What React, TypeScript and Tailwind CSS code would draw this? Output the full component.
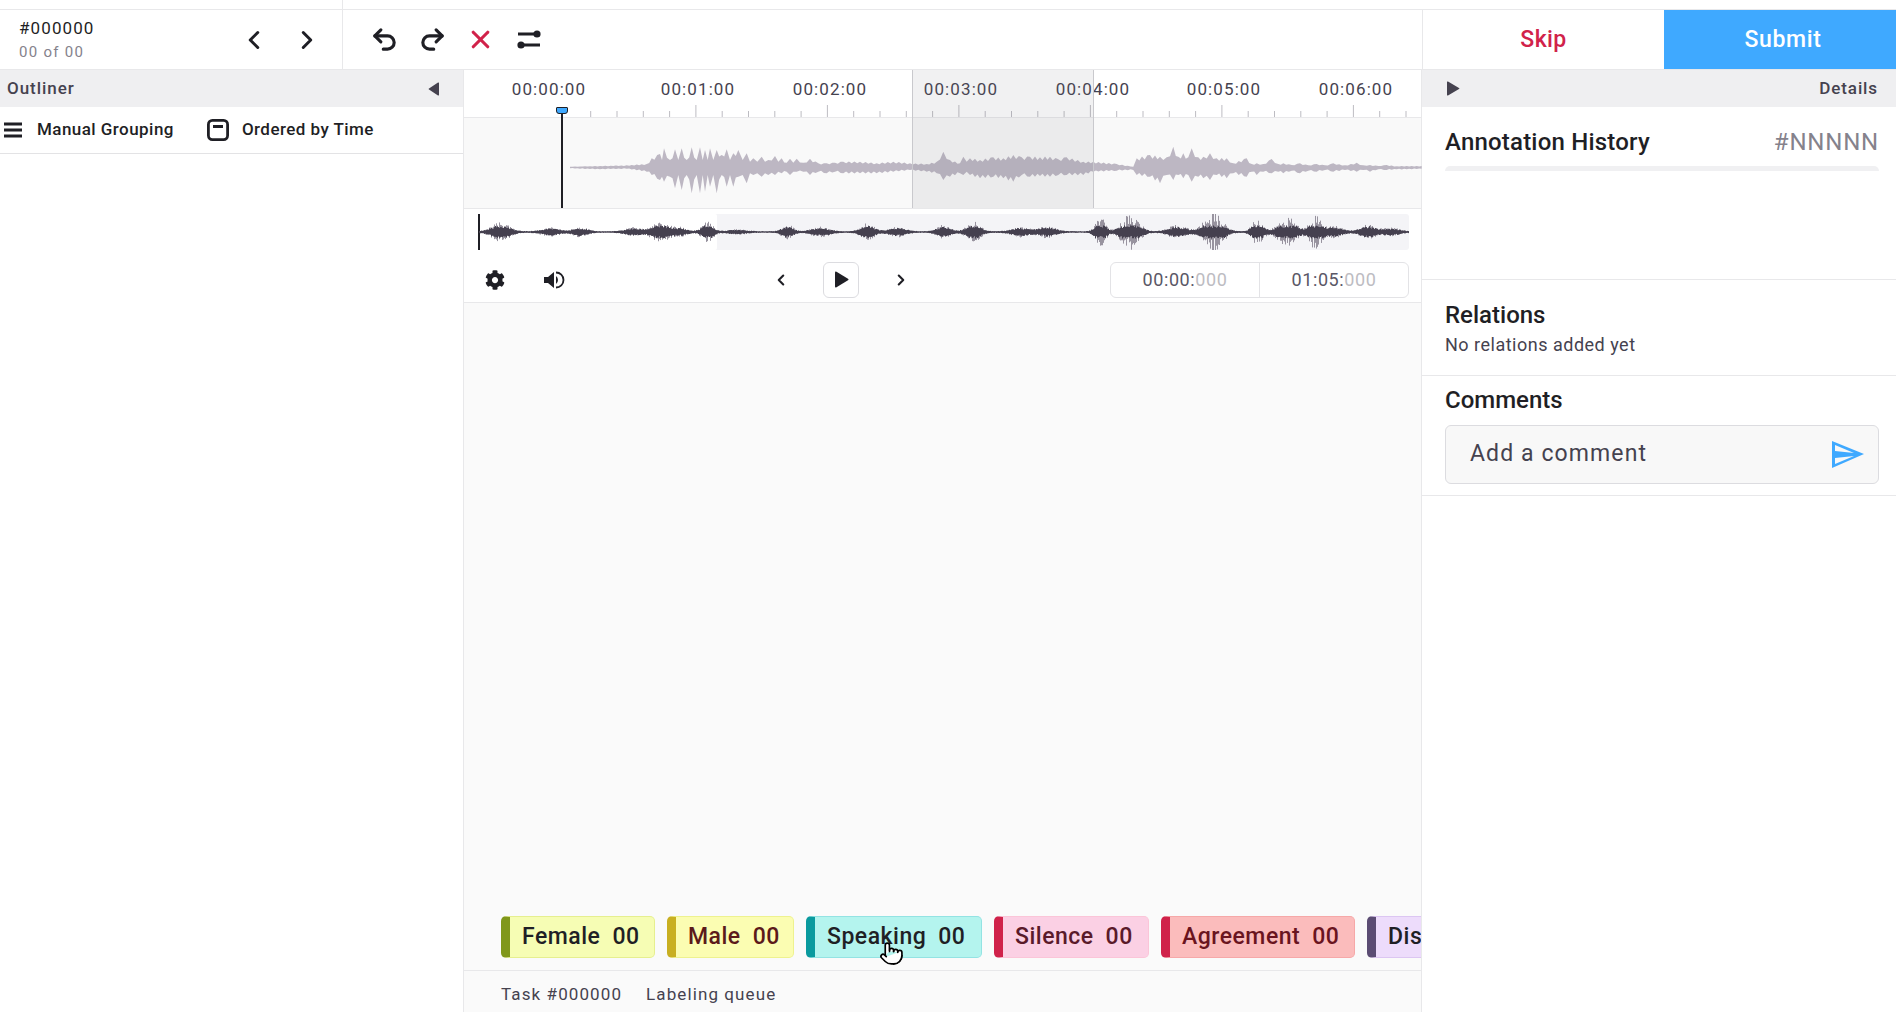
import { ChevronLeft, ChevronRight, Pointer, Redo2, Undo2, X } from 'lucide-react';
import { FaCog } from 'react-icons/fa';

const ROW_TEXT = "font-['Roboto',sans-serif]";

// envelope points sampled from the main waveform: x, top, bottom
const WAVE_A = [
  [330, 320, 325], [420, 318, 328], [500, 316, 326], [560, 312, 335], [575, 295, 345], [600, 282, 360],
  [606, 300, 350], [612, 265, 365], [630, 300, 350], [645, 268, 385], [655, 300, 345], [665, 265, 390],
  [680, 300, 345], [695, 262, 400], [710, 300, 345], [720, 262, 400], [728, 300, 345], [735, 270, 395],
  [743, 300, 345], [750, 265, 380], [760, 300, 345], [770, 270, 400], [785, 285, 345], [800, 268, 380],
  [810, 300, 345], [820, 280, 380], [835, 270, 350], [848, 300, 345], [860, 280, 370], [870, 305, 340],
  [880, 295, 345], [892, 305, 340], [905, 290, 350], [915, 305, 340], [925, 300, 345], [945, 288, 345],
  [955, 305, 335], [965, 295, 340], [980, 308, 335], [990, 296, 345], [1000, 308, 335], [1010, 296, 335],
  [1030, 308, 335], [1050, 296, 345], [1075, 310, 335], [1100, 310, 340], [1125, 308, 335], [1150, 305, 340],
  [1200, 305, 340], [1250, 310, 340], [1300, 305, 335], [1350, 310, 330], [1400, 312, 335], [1430, 305, 340],
  [1450, 275, 360], [1470, 300, 350], [1500, 310, 340],
];
const WAVE_B = [
  [0, 312, 340], [40, 290, 345], [50, 305, 335], [60, 295, 345], [90, 300, 355], [130, 292, 350],
  [160, 295, 355], [190, 285, 365], [215, 292, 345], [240, 290, 350], [270, 292, 348], [300, 290, 350],
  [325, 298, 345], [350, 292, 345], [400, 305, 345], [430, 305, 335], [500, 312, 332], [550, 320, 330],
  [560, 295, 345], [600, 285, 350], [630, 290, 370], [650, 292, 345], [670, 260, 360], [685, 290, 345],
  [700, 280, 355], [715, 292, 345], [725, 265, 365], [745, 292, 350], [760, 290, 355], [780, 280, 360],
  [800, 295, 345], [830, 295, 355], [850, 310, 340], [890, 295, 350], [905, 312, 335], [920, 310, 345],
  [940, 312, 335], [965, 297, 340], [985, 312, 335], [1000, 310, 340], [1025, 315, 332], [1050, 310, 340],
  [1075, 316, 332], [1100, 312, 335], [1125, 316, 330], [1150, 310, 335], [1185, 316, 330], [1220, 308, 335],
  [1240, 316, 330], [1260, 315, 335], [1285, 318, 328], [1310, 315, 330], [1340, 319, 328], [1370, 318, 328],
  [1415, 318, 326],
];

const mainPath = () => {
  const pts = [
    ...WAVE_A.map(([x, t, b]) => [460 + x / 3, 60 + t / 3, 60 + b / 3]),
    ...WAVE_B.map(([x, t, b]) => [950 + x / 3, 60 + t / 3, 60 + b / 3]),
  ].filter((p, i, all) => i === 0 || p[0] > all[i - 1][0]);
  // long segments get a small serration so the envelope does not read as smooth
  const fine: number[][] = [];
  const mid = 167.3;
  pts.forEach((p, i) => {
    fine.push(p);
    const next = pts[i + 1];
    if (!next) return;
    const steps = Math.floor((next[0] - p[0]) / 2.5);
    for (let s = 1; s < steps; s += 1) {
      const t = s / steps;
      const k = s % 2 ? 0.72 : 1.04;
      const top = p[1] + (next[1] - p[1]) * t;
      const bottom = p[2] + (next[2] - p[2]) * t;
      fine.push([p[0] + (next[0] - p[0]) * t, mid - (mid - top) * k, mid + (bottom - mid) * k]);
    }
  });
  const top = fine.map((p) => `${p[0].toFixed(1)},${p[1].toFixed(1)}`);
  const bottom = [...fine].reverse().map((p) => `${p[0].toFixed(1)},${p[2].toFixed(1)}`);
  return `M${top.join('L')}L${bottom.join('L')}Z`;
};

// x, half width, amplitude of each burst on the overview
const BURSTS = [
  [500, 13, 11], [550, 13, 5], [580, 10, 6], [633, 12, 5], [660, 13, 11], [680, 10, 5], [707, 8, 12], [737, 13, 3],
  [787, 8, 9], [820, 13, 6], [867, 10, 10], [897, 12, 6], [943, 10, 8], [973, 10, 12], [1020, 13, 6], [1047, 12, 7],
  [1100, 7, 18], [1130, 12, 22], [1177, 13, 8], [1213, 13, 23], [1257, 8, 15], [1287, 13, 17], [1315, 8, 20],
  [1333, 13, 7], [1367, 10, 9], [1390, 13, 5],
];

const noise = (n: number) => {
  const v = Math.sin(n * 12.9898) * 43758.5453;
  return v - Math.floor(v);
};

const overviewPaths = () => {
  let core = '';
  let outer = '';
  for (let x = 479; x < 1409; x += 1) {
    let amp = 0.5;
    BURSTS.forEach(([c, w, a]) => {
      amp += a * Math.exp(-((x - c) * (x - c)) / (2 * w * w * 0.45));
    });
    const up = amp * (0.25 + noise(x) * 0.6);
    const down = amp * (0.25 + noise(x + 900) * 0.6);
    outer += `M${x + 0.5} ${233 - up}V${233 + down}`;
    const c = Math.min(amp * 0.55, 6) + 0.6;
    core += `M${x + 0.5} ${233 - c * (0.6 + noise(x + 40) * 0.4)}V${233 + c * (0.6 + noise(x + 80) * 0.4)}`;
  }
  return { core, outer };
};

const RULER_LABELS = [
  ['00:00:00', 549], ['00:01:00', 698], ['00:02:00', 830], ['00:03:00', 961],
  ['00:04:00', 1093], ['00:05:00', 1224], ['00:06:00', 1356],
] as const;

const CHIPS = [
  { name: 'Female', count: '00', w: 'w-[154px]', box: 'bg-[#f6fdb4] border-[#e6ef8f] border-l-[#80971b] text-[#1f1f25]' },
  { name: 'Male', count: '00', w: 'w-[127px]', box: 'bg-[#fbfdb2] border-[#eef28f] border-l-[#c8af21] text-[#5c1a1a]' },
  { name: 'Speaking', count: '00', w: 'w-[176px]', box: 'bg-[#b4f4ee] border-[#93e3e3] border-l-[#0a9a9e] text-[#1f1f25]' },
  { name: 'Silence', count: '00', w: 'w-[155px]', box: 'bg-[#fbd0e4] border-[#fbc5d8] border-l-[#d0224a] text-[#5a1a2a]' },
  { name: 'Agreement', count: '00', w: 'w-[194px]', box: 'bg-[#fbbcbc] border-[#f6a8a8] border-l-[#d0224a] text-[#6a1420]' },
  { name: 'Dis', count: '', w: 'w-[120px]', box: 'bg-[#eddcfb] border-[#dcc6f2] border-l-[#5b4c73] text-[#1f1f25]' },
];

function Topbar() {
  return (
    <div className="flex h-[60px] shrink-0 border-b border-[#e8e8ea]">
      <div className="flex w-[343px] shrink-0 items-center border-r border-[#e8e8ea] pl-[19px]">
        <div className="w-[220px]">
          <div className="text-[17px] leading-[22px] tracking-[1.1px] text-[#1f1f25]">#000000</div>
          <div className="mt-[3px] text-[15px] leading-[20px] tracking-[1.3px] text-[#85828c]">00 of 00</div>
        </div>
        <ChevronLeft size={30} strokeWidth={2.4} className="text-[#1f1f25]" />
        <ChevronRight size={30} strokeWidth={2.4} className="ml-[23px] text-[#1f1f25]" />
      </div>
      <div className="flex flex-1 items-center gap-[19px] border-r border-[#e8e8ea] pl-[27px]">
        <Undo2 size={29} strokeWidth={2.6} className="text-[#1f1f25]" />
        <Redo2 size={29} strokeWidth={2.6} className="text-[#1f1f25]" />
        <X size={29} strokeWidth={2.6} className="text-[#d1224a]" />
        <svg width="24" height="24" viewBox="0 0 24 24" className="ml-[3px]">
          <path d="M1 6h18M5 17h18" stroke="#1f1f25" strokeWidth="2.8" fill="none" />
          <circle cx="20" cy="6" r="3.6" fill="#1f1f25" />
          <circle cx="4" cy="17" r="3.6" fill="#1f1f25" />
        </svg>
      </div>
      <div className="flex w-[473px] shrink-0 text-[23px] font-medium">
        <button className="w-[241px] pt-[2px] tracking-[0.4px] text-[#d1224a]">Skip</button>
        <button className="flex-1 bg-[#3fa9ff] pt-[2px] pl-[6px] tracking-[0.6px] text-white">Submit</button>
      </div>
    </div>
  );
}

function Outliner() {
  return (
    <div className="w-[464px] shrink-0 border-r border-[#e8e8ea]">
      <div className="flex h-[37px] items-center justify-between bg-[#efeff1] pr-[23px] pl-[7px] text-[17px] font-medium tracking-[0.95px] text-[#45424f]">
        Outliner
        <svg width="12" height="14" viewBox="0 0 12 14">
          <path d="M11 1v12a.6.6 0 0 1-1 .4L1 7.6a.7.7 0 0 1 0-1.2L10 .6a.6.6 0 0 1 1 .4z" fill="#45424f" />
        </svg>
      </div>
      <div className="flex h-[47px] items-center border-b border-[#e3e3e5] pl-[4px] text-[17px] font-medium tracking-[0.45px] text-[#1f1f25]">
        <svg width="18" height="16" viewBox="0 0 18 16">
          <path d="M0 2h18M0 8h18M0 14h18" stroke="#1f1f25" strokeWidth="2.8" strokeLinecap="round" />
        </svg>
        <span className="ml-[15px]">Manual Grouping</span>
        <svg width="22" height="22" viewBox="0 0 22 22" className="ml-[33px]">
          <rect x="1.4" y="1.4" width="19.2" height="19.2" rx="4" fill="none" stroke="#1f1f25" strokeWidth="2.8" />
          <rect x="6" y="6" width="10" height="3" fill="#1f1f25" />
        </svg>
        <span className="ml-[13px]">Ordered by Time</span>
      </div>
    </div>
  );
}

function Timeline() {
  const minorTicks = Array.from({ length: 32 }, (_, i) => 590.7 + i * 26.3);
  const { core, outer } = overviewPaths();
  return (
    <>
      <div className="relative h-[139px] shrink-0 border-b border-[#e8e8ea]">
        <div className="relative h-[48px] border-b border-[#e8e8ea]">
          {RULER_LABELS.map(([label, x]) => (
            <span
              key={label}
              className="absolute top-[6px] -translate-x-1/2 text-[17px] leading-[26px] tracking-[1.1px] text-[#45424f]"
              style={{ left: x - 464 }}
            >
              {label}
            </span>
          ))}
          <svg width="958" height="12" viewBox="464 105 958 12" className="absolute bottom-0 left-0">
            {minorTicks.map((x, i) => {
              const major = i % 5 === 4;
              return <path key={x} d={`M${x} ${major ? 105 : 111}V117`} stroke="#bdbcc2" strokeWidth="1" />;
            })}
          </svg>
        </div>
        <div className="h-[90px] bg-[#f9f9f9]">
          <svg width="958" height="90" viewBox="464 118 958 90">
            <path d={mainPath()} fill="#bdb7c3" />
          </svg>
        </div>
        <div className="absolute top-0 bottom-0 left-[448px] w-[182px] border-x border-[#c9c9cd] bg-[#77777f]/10" />
        <div className="absolute top-[37px] bottom-0 left-[96.5px] w-[2px] bg-[#1f1f25]" />
        <div className="absolute top-[37px] left-[91.5px] h-[7px] w-[12px] rounded-t-[1px] rounded-b-[3px] border border-[#1f1f25] bg-[#3fa9ff]" />
      </div>
      <div className="relative mt-[5px] ml-[14px] h-[36px] w-[931px] shrink-0 rounded-[3px] bg-[#f4f4f7]">
        <div className="absolute inset-y-0 left-0 w-[239px] rounded-[2px] bg-white" />
        <div className="absolute inset-y-0 left-0 w-[2px] bg-[#1f1f25]" />
        <svg width="931" height="36" viewBox="478 215 931 36" className="absolute top-0 left-0">
          <path d={outer} stroke="#98939f" strokeWidth="1" />
          <path d={core} stroke="#45404f" strokeWidth="1" />
        </svg>
      </div>
      <div className="flex h-[53px] shrink-0 items-center border-b border-[#e8e8ea] pt-[7px]">
        <FaCog size={20} className="ml-[21px] text-[#1f1f25]" />
        <svg width="22" height="20" viewBox="0 0 22 20" className="ml-[38px]">
          <path d="M1 7h4l6-5v16l-6-5H1z" fill="#1f1f25" />
          <path d="M13 6a5 5 0 0 1 0 8z" fill="#1f1f25" />
          <path d="M13 2.5a7.5 7.5 0 0 1 0 15" fill="none" stroke="#1f1f25" strokeWidth="1.8" />
        </svg>
        <ChevronLeft size={18} strokeWidth={2.8} className="ml-[207px] text-[#1f1f25]" />
        <div className="ml-[33px] flex h-[36px] w-[36px] items-center justify-center rounded-[6px] border border-[#dcdce0] bg-white">
          <svg width="15" height="17" viewBox="0 0 15 17">
            <path d="M1 1.5v14a1 1 0 0 0 1.5.8l11.5-7a1 1 0 0 0 0-1.600L2.500.7A1 1 0 0 0 1 1.500z" fill="#1f1f25" />
          </svg>
        </div>
        <ChevronRight size={18} strokeWidth={2.8} className="ml-[33px] text-[#1f1f25]" />
        <div className="ml-[200px] flex h-[36px] w-[299px] rounded-[6px] border border-[#e3e3e6] text-[18px] tracking-[0.6px] text-[#5a5766]">
          <div className="flex w-[149px] items-center justify-center border-r border-[#e3e3e6]">
            00:00:<span className="text-[#bdbcc2]">000</span>
          </div>
          <div className="flex flex-1 items-center justify-center">
            01:05:<span className="text-[#bdbcc2]">000</span>
          </div>
        </div>
      </div>
    </>
  );
}

function Labels() {
  return (
    <div className="flex h-[55px] shrink-0 gap-[12px] overflow-hidden border-b border-[#e8e8ea] pl-[37px]">
      {CHIPS.map((chip) => (
        <div
          key={chip.name}
          className={`relative flex h-[42px] shrink-0 items-center gap-[12px] rounded-[5px] border border-l-[9px] pl-[12px] text-[23px] font-medium tracking-[0.5px] whitespace-nowrap ${chip.w} ${chip.box}`}
        >
          <span>{chip.name}</span>
          {chip.count && <span>{chip.count}</span>}
          {chip.name === 'Speaking' && (
            <Pointer size={25} strokeWidth={1.6} fill="white" className="absolute top-[24px] left-[64px] text-black" />
          )}
        </div>
      ))}
    </div>
  );
}

function Details() {
  return (
    <div className="w-[474px] shrink-0 text-[#1f1f25]">
      <div className="flex h-[37px] items-center justify-between bg-[#efeff1] pr-[18px] pl-[24px] text-[17px] font-medium tracking-[0.9px] text-[#45424f]">
        <svg width="14" height="15" viewBox="0 0 14 15">
          <path d="M1 1v13a.6.6 0 0 0 1 .4l11-6.300a.7.7 0 0 0 0-1.200L2 .6A.6.6 0 0 0 1 1z" fill="#45424f" />
        </svg>
        Details
      </div>
      <div className="h-[173px] border-b border-[#e8e8ea] pr-[17px] pl-[23px]">
        <div className="flex justify-between pt-[21px] text-[24px] leading-[28px] font-medium">
          <span className="tracking-[0.2px]">Annotation History</span>
          <span className="font-normal tracking-[0.8px] text-[#85828c]">#NNNNN</span>
        </div>
        <div className="mt-[10px] h-[5px] rounded-t-[5px] bg-[#f0f0f2]" />
      </div>
      <div className="h-[96px] border-b border-[#e8e8ea] pt-[21px] pl-[23px]">
        <div className="text-[24px] leading-[28px] font-medium">Relations</div>
        <div className="mt-[5px] text-[18px] leading-[22px] tracking-[0.5px] text-[#45424f]">No relations added yet</div>
      </div>
      <div className="h-[120px] border-b border-[#e8e8ea] pt-[10px] pr-[17px] pl-[23px]">
        <div className="text-[24px] leading-[28px] font-medium">Comments</div>
        <div className="mt-[11px] flex h-[59px] items-center justify-between rounded-[6px] border border-[#dcdce0] bg-[#f8f8f8] pr-[14px] pl-[24px]">
          <span className="text-[23px] tracking-[1.1px] text-[#45424f]">Add a comment</span>
          <svg width="32" height="27" viewBox="0 0 32 27">
            <path fillRule="evenodd" d="M0 0L32 13L0 27ZM3 4L22 12L3 10ZM3 23L22 15L3 17Z" fill="#3fa9ff" />
          </svg>
        </div>
      </div>
    </div>
  );
}

export default function App() {
  return (
    <div className={`flex h-[1012px] w-[1896px] flex-col overflow-hidden bg-white ${ROW_TEXT}`}>
      <div className="h-[10px] shrink-0 border-b border-[#e8e8ea]">
        <div className="h-full w-[343px] border-r border-[#e8e8ea]" />
      </div>
      <Topbar />
      <div className="flex flex-1 overflow-hidden">
        <Outliner />
        <div className="flex w-[958px] shrink-0 flex-col border-r border-[#e8e8ea] bg-white">
          <Timeline />
          <div className="flex-1 bg-[#fafafa]" />
          <div className="bg-[#fafafa]">
            <Labels />
            <div className="flex h-[41px] items-center gap-[24px] pt-[6px] pl-[37px] text-[17px] tracking-[1.1px] text-[#45424f]">
              <span>Task #000000</span>
              <span>Labeling queue</span>
            </div>
          </div>
        </div>
        <Details />
      </div>
    </div>
  );
}
